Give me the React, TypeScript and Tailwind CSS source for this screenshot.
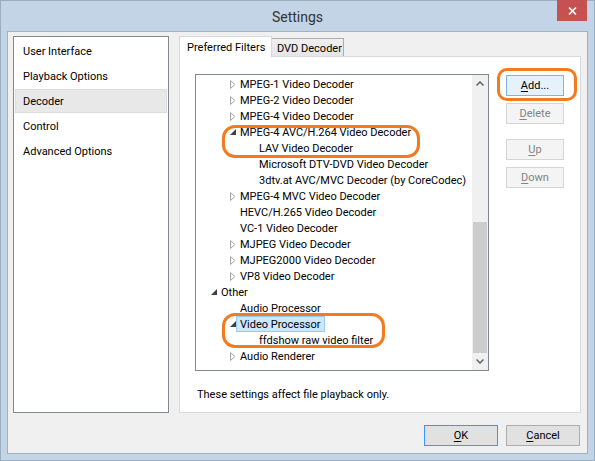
import React from "react";

type Row = { level: number; arrow: "closed" | "open" | "none"; text: string; selected?: boolean };

const rows: Row[] = [
  { level: 1, arrow: "closed", text: "MPEG-1 Video Decoder" },
  { level: 1, arrow: "closed", text: "MPEG-2 Video Decoder" },
  { level: 1, arrow: "closed", text: "MPEG-4 Video Decoder" },
  { level: 1, arrow: "open", text: "MPEG-4 AVC/H.264 Video Decoder" },
  { level: 2, arrow: "none", text: "LAV Video Decoder" },
  { level: 2, arrow: "none", text: "Microsoft DTV-DVD Video Decoder" },
  { level: 2, arrow: "none", text: "3dtv.at AVC/MVC Decoder (by CoreCodec)" },
  { level: 1, arrow: "closed", text: "MPEG-4 MVC Video Decoder" },
  { level: 1, arrow: "none", text: "HEVC/H.265 Video Decoder" },
  { level: 1, arrow: "none", text: "VC-1 Video Decoder" },
  { level: 1, arrow: "closed", text: "MJPEG Video Decoder" },
  { level: 1, arrow: "closed", text: "MJPEG2000 Video Decoder" },
  { level: 1, arrow: "closed", text: "VP8 Video Decoder" },
  { level: 0, arrow: "open", text: "Other" },
  { level: 1, arrow: "none", text: "Audio Processor" },
  { level: 1, arrow: "open", text: "Video Processor", selected: true },
  { level: 2, arrow: "none", text: "ffdshow raw video filter" },
  { level: 1, arrow: "closed", text: "Audio Renderer" },
];

const pages = ["User Interface", "Playback Options", "Decoder", "Control", "Advanced Options"];

function Arrow({ kind }: { kind: Row["arrow"] }) {
  if (kind === "closed")
    return (
      <svg width="6" height="9" viewBox="0 0 6 9">
        <path d="M0.5 0.5 L5 4.5 L0.5 8.5 Z" fill="none" stroke="#a6a6a6" strokeWidth="1" />
      </svg>
    );
  if (kind === "open")
    return (
      <svg width="6" height="6" viewBox="0 0 6 6">
        <path d="M6 0 L6 6 L0 6 Z" fill="#404040" />
      </svg>
    );
  return null;
}

function Ul({ first, rest }: { first: string; rest: string }) {
  return (
    <span>
      <span className="underline underline-offset-2">{first}</span>
      {rest}
    </span>
  );
}

function SideButton({ children, active }: { children: React.ReactNode; active?: boolean }) {
  return (
    <div
      className={
        active
          ? "h-[21px] w-[58px] flex items-center justify-center border border-[#7eb4ea] bg-[#e5f1fb] text-black"
          : "h-[21px] w-[58px] flex items-center justify-center border border-[#d5d5d5] bg-[#f4f4f4] text-[#838383]"
      }
    >
      {children}
    </div>
  );
}

export default function App() {
  return (
    <div className="w-[595px] h-[461px] bg-[#c2d4e5] shadow-[inset_0_0_0_1px_#9aafc3] flex flex-col font-['Roboto',sans-serif] text-[11px] text-black leading-none">
      <div className="relative h-[31px] flex items-center justify-center">
        <span className="text-[14px] text-[#333] pt-[3px]">Settings</span>
        <div className="absolute right-[8px] top-0 w-[30px] h-[21px] bg-[#c75050] flex items-center justify-center">
          <svg width="9" height="8" viewBox="0 0 9 8">
            <path d="M1 0.5 L8 7.5 M8 0.5 L1 7.5" stroke="white" strokeWidth="1.6" />
          </svg>
        </div>
      </div>

      <div className="ml-[7px] w-[581px] h-[423px] bg-[#f0f0f0] border border-[#a3b1bf] flex flex-col">
        <div className="flex pl-[5px] pt-[4px]">
          <div className="w-[156px] h-[377px] border border-[#828790] bg-white pt-[2px] px-px">
            {pages.map((p) => (
              <div
                key={p}
                className={
                  p === "Decoder"
                    ? "h-[24px] mb-px flex items-center pl-[7px] bg-[#e8e8e8] border border-[#dcdcdc]"
                    : "h-[24px] mb-px flex items-center pl-[8px]"
                }
              >
                {p}
              </div>
            ))}
          </div>

          <div className="ml-[10px] flex flex-col">
            <div className="flex items-end h-[20px]">
              <div className="relative z-10 -mb-px w-[93px] h-[21px] pl-[7px] pt-[5px] border border-b-0 border-[#d9d9d9] bg-white">
                Preferred Filters
              </div>
              <div className="w-[72px] h-[18px] pl-[5px] pt-[4px] border border-b-0 border-l-0 border-[#acacac] bg-gradient-to-b from-[#f0f0f0] to-[#e5e5e5]">
                DVD Decoder
              </div>
            </div>
            <div className="w-[402px] h-[357px] border border-[#d9d9d9] bg-white pl-[15px] pt-[17px]">
              <div className="flex">
                <div className="relative w-[294px] h-[297px] border border-[#828790] flex">
                  <div className="flex-1 min-w-0 overflow-hidden pt-px">
                    {rows.map((r, i) => (
                      <div key={i} className="h-[16px] flex items-center whitespace-nowrap" style={{ paddingLeft: 9 + r.level * 19 }}>
                        <span className="w-[16px] shrink-0 flex items-center justify-center pl-[1px]">
                          <Arrow kind={r.arrow} />
                        </span>
                        {r.selected ? (
                          <span className="-ml-[4px] h-[16px] px-[3px] flex items-center border border-[#99c9ef] bg-[#cce8ff]">{r.text}</span>
                        ) : (
                          <span>{r.text}</span>
                        )}
                      </div>
                    ))}
                  </div>
                  <div className="w-[16px] shrink-0 bg-[#f0f0f0] flex flex-col items-center">
                    <div className="h-[17px] flex items-center justify-center">
                      <svg width="8" height="5" viewBox="0 0 8 5">
                        <path d="M0.5 4.5 L4 1 L7.5 4.5" fill="none" stroke="#606060" strokeWidth="1.5" />
                      </svg>
                    </div>
                    <div className="mt-[130px] w-[14px] h-[131px] bg-[#cdcdcd]" />
                    <div className="flex-1 flex items-center justify-center">
                      <svg width="8" height="5" viewBox="0 0 8 5">
                        <path d="M0.5 0.5 L4 4 L7.5 0.5" fill="none" stroke="#606060" strokeWidth="1.5" />
                      </svg>
                    </div>
                  </div>
                  <div className="absolute left-[26px] top-[50px] w-[198px] h-[33px] border-[3px] border-[#f47a20] rounded-[13px]" />
                  <div className="absolute left-[26px] top-[238px] w-[163px] h-[35px] border-[3px] border-[#f47a20] rounded-[13px]" />
                </div>
                <div className="relative ml-[17px] mt-px flex flex-col">
                  <SideButton active>
                    <Ul first="A" rest="dd..." />
                  </SideButton>
                  <div className="mt-[7px]">
                    <SideButton>
                      <Ul first="D" rest="elete" />
                    </SideButton>
                  </div>
                  <div className="mt-[15px]">
                    <SideButton>
                      <Ul first="U" rest="p" />
                    </SideButton>
                  </div>
                  <div className="mt-[7px]">
                    <SideButton>
                      <Ul first="D" rest="own" />
                    </SideButton>
                  </div>
                  <div className="absolute -left-[9px] -top-[7px] w-[80px] h-[33px] border-[3px] border-[#f47a20] rounded-[10px]" />
                </div>
              </div>
              <div className="mt-[18px] ml-[2px]">These settings affect file playback only.</div>
            </div>
          </div>
        </div>

        <div className="flex justify-end gap-[8px] pr-[7px] mt-[12px]">
          <div className="w-[74px] h-[21px] flex items-center justify-center border border-[#3399ff] bg-[#e1e1e1]">
            <Ul first="O" rest="K" />
          </div>
          <div className="w-[74px] h-[21px] flex items-center justify-center border border-[#adadad] bg-[#e1e1e1]">
            <Ul first="C" rest="ancel" />
          </div>
        </div>
      </div>
    </div>
  );
}
